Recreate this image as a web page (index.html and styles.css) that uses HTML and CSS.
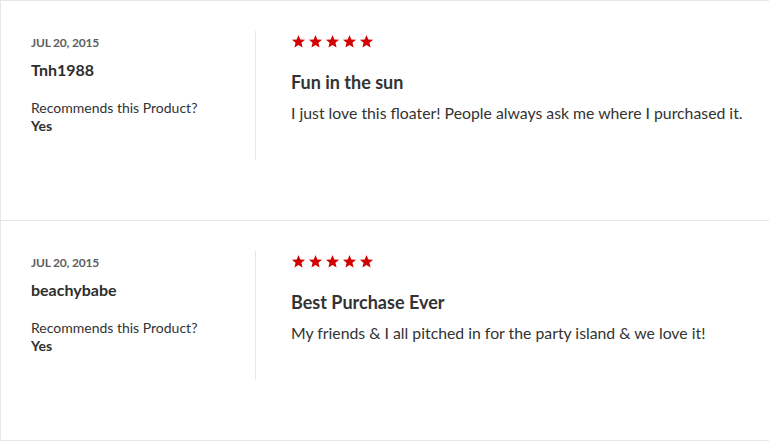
FILE: index.html
```html
<!DOCTYPE html>
<html>
<head>
<meta charset="utf-8">
<link rel="stylesheet" href="styles.css">
</head>
<body>
<div class="reviews">
  <div class="review">
    <div class="meta">
      <div class="date">JUL 20, 2015</div>
      <div class="name">Tnh1988</div>
      <div class="rec">Recommends this Product?</div>
      <div class="yes">Yes</div>
    </div>
    <div class="content">
      <div class="stars">
        <svg viewBox="0 0 24 24"><polygon points="12,1.5 14.9,8.6 22.5,9.2 16.7,14.1 18.5,21.6 12,17.5 5.5,21.6 7.3,14.1 1.5,9.2 9.1,8.6"/></svg>
        <svg viewBox="0 0 24 24"><polygon points="12,1.5 14.9,8.6 22.5,9.2 16.7,14.1 18.5,21.6 12,17.5 5.5,21.6 7.3,14.1 1.5,9.2 9.1,8.6"/></svg>
        <svg viewBox="0 0 24 24"><polygon points="12,1.5 14.9,8.6 22.5,9.2 16.7,14.1 18.5,21.6 12,17.5 5.5,21.6 7.3,14.1 1.5,9.2 9.1,8.6"/></svg>
        <svg viewBox="0 0 24 24"><polygon points="12,1.5 14.9,8.6 22.5,9.2 16.7,14.1 18.5,21.6 12,17.5 5.5,21.6 7.3,14.1 1.5,9.2 9.1,8.6"/></svg>
        <svg viewBox="0 0 24 24"><polygon points="12,1.5 14.9,8.6 22.5,9.2 16.7,14.1 18.5,21.6 12,17.5 5.5,21.6 7.3,14.1 1.5,9.2 9.1,8.6"/></svg>
      </div>
      <div class="title">Fun in the sun</div>
      <div class="text">I just love this floater! People always ask me where I purchased it.</div>
    </div>
  </div>
  <div class="review">
    <div class="meta">
      <div class="date">JUL 20, 2015</div>
      <div class="name">beachybabe</div>
      <div class="rec">Recommends this Product?</div>
      <div class="yes">Yes</div>
    </div>
    <div class="content">
      <div class="stars">
        <svg viewBox="0 0 24 24"><polygon points="12,1.5 14.9,8.6 22.5,9.2 16.7,14.1 18.5,21.6 12,17.5 5.5,21.6 7.3,14.1 1.5,9.2 9.1,8.6"/></svg>
        <svg viewBox="0 0 24 24"><polygon points="12,1.5 14.9,8.6 22.5,9.2 16.7,14.1 18.5,21.6 12,17.5 5.5,21.6 7.3,14.1 1.5,9.2 9.1,8.6"/></svg>
        <svg viewBox="0 0 24 24"><polygon points="12,1.5 14.9,8.6 22.5,9.2 16.7,14.1 18.5,21.6 12,17.5 5.5,21.6 7.3,14.1 1.5,9.2 9.1,8.6"/></svg>
        <svg viewBox="0 0 24 24"><polygon points="12,1.5 14.9,8.6 22.5,9.2 16.7,14.1 18.5,21.6 12,17.5 5.5,21.6 7.3,14.1 1.5,9.2 9.1,8.6"/></svg>
        <svg viewBox="0 0 24 24"><polygon points="12,1.5 14.9,8.6 22.5,9.2 16.7,14.1 18.5,21.6 12,17.5 5.5,21.6 7.3,14.1 1.5,9.2 9.1,8.6"/></svg>
      </div>
      <div class="title">Best Purchase Ever</div>
      <div class="text">My friends &amp; I all pitched in for the party island &amp; we love it!</div>
    </div>
  </div>
</div>
</body>
</html>
```
FILE: styles.css
```css
html, body {
  margin: 0;
  padding: 0;
  background: #fff;
}
body {
  font-family: Lato, "Open Sans", sans-serif;
  color: #333;
}
.reviews {
  border-left: 1px solid #e6e6e6;
  border-bottom: 1px solid #e6e6e6;
}
.review {
  display: flex;
  height: 220px;
  box-sizing: border-box;
  border-top: 1px solid #e6e6e6;
  padding: 30px 0 0 30px;
  align-items: flex-start;
}
.meta {
  width: 225px;
  height: 129px;
  box-sizing: border-box;
  border-right: 1px solid #e6e6e6;
}
.date {
  font-size: 12px;
  font-weight: 700;
  color: #5e5e5e;
  line-height: 16px;
  margin-top: 4px;
  letter-spacing: -0.2px;
}
.name {
  font-size: 16px;
  font-weight: 700;
  color: #2e2e2e;
  line-height: 20px;
  margin-top: 9px;
}
.rec {
  font-size: 14px;
  color: #333;
  line-height: 18px;
  margin-top: 19px;
}
.yes {
  font-size: 14px;
  font-weight: 700;
  color: #2e2e2e;
  line-height: 18px;
}
.content {
  padding-left: 35px;
}
.stars {
  display: flex;
  gap: 2px;
  margin-top: 3px;
}
.stars svg {
  width: 15px;
  height: 15px;
  fill: #d20000;
}
.title {
  font-size: 18px;
  font-weight: 700;
  color: #333;
  line-height: 24px;
  margin-top: 21px;
}
.text {
  font-size: 15.8px;
  color: #333;
  line-height: 20px;
  margin-top: 9px;
}
```
